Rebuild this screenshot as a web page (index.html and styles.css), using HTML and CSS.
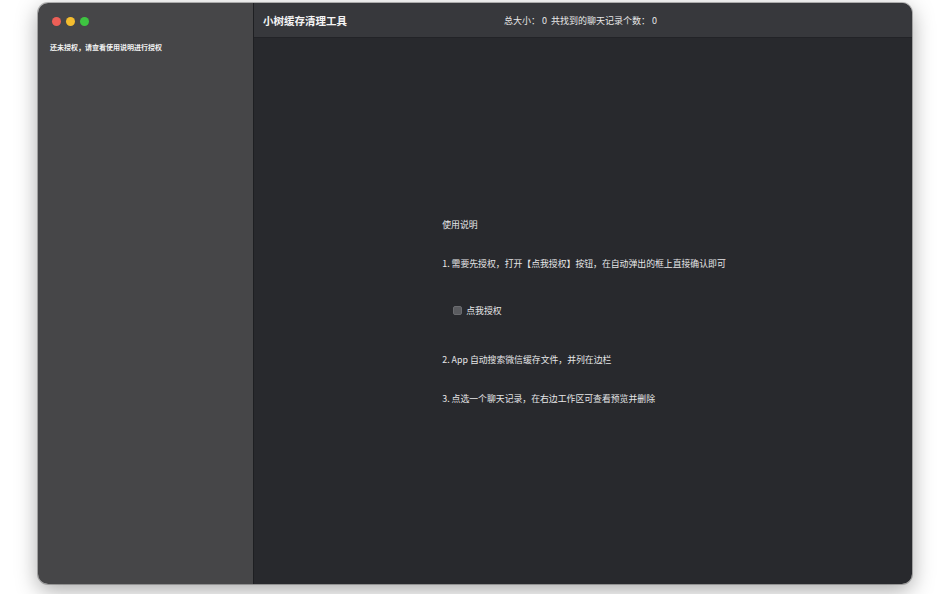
FILE: index.html
```html
<html><head>
<meta charset="UTF-8">
<meta name="viewport" content="width=device-width, initial-scale=1.0">
<title>小树缓存清理工具</title>
<link rel="stylesheet" href="styles.css">
</head>
<body>
  <div class="window">
    <aside class="sidebar">
      <div class="lights">
        <span class="light red"></span>
        <span class="light yellow"></span>
        <span class="light green"></span>
      </div>
      <p class="auth-tip">还未授权，请查看使用说明进行授权</p>
    </aside>

    <main class="main">
      <header class="titlebar">
        <span class="app-title">小树缓存清理工具</span>
        <span class="stats">总大小： 0 &nbsp;共找到的聊天记录个数： 0</span>
      </header>

      <section class="content">
        <div class="guide">
          <p class="guide-title">使用说明</p>
          <p class="step">1. 需要先授权，打开【点我授权】按钮，在自动弹出的框上直接确认即可</p>
          <label class="auth-check"><span class="box"></span>点我授权</label>
          <p class="step">2. App 自动搜索微信缓存文件，并列在边栏</p>
          <p class="step">3. 点选一个聊天记录，在右边工作区可查看预览并删除</p>
        </div>
      </section>
    </main>
  </div>
</body></html>
```

FILE: styles.css
```css
body {
  margin: 0;
  background-color: #fff;
  font-family: "Noto Sans CJK SC", "Noto Sans", sans-serif;
  color: #e6e6e8;
}
.window {
  display: flex;
  width: 874px;
  height: 581px;
  margin: 3px 0 0 38px;
  border-radius: 10px;
  overflow: hidden;
  box-shadow: 0 6px 22px rgba(0,0,0,0.35), 0 0 0 1px rgba(0,0,0,0.25);
}
.sidebar {
  width: 216px;
  background-color: #464648;
  border-right: 1px solid #1e1f22;
  box-sizing: border-box;
}
.lights {
  display: flex;
  gap: 5px;
  padding: 14px 0 0 14px;
}
.light {
  width: 9px;
  height: 9px;
  border-radius: 50%;
}
.red { background-color: #ed5f57; }
.yellow { background-color: #f4bd2f; }
.green { background-color: #3ec441; }
.auth-tip {
  margin: 16px 0 0 12px;
  font-size: 7px;
  font-weight: bold;
  color: #f2f2f2;
}
.main {
  flex: 1;
  display: flex;
  flex-direction: column;
  background-color: #28292d;
}
.titlebar {
  height: 35px;
  display: flex;
  align-items: center;
  background-color: #37383c;
  border-bottom: 1px solid #222327;
  box-sizing: border-box;
  padding-left: 9px;
}
.app-title {
  font-size: 10.5px;
  font-weight: bold;
  color: #f4f4f4;
  width: 241px;
}
.stats {
  font-size: 9px;
  color: #e8e8e8;
}
.content {
  flex: 1;
  display: flex;
  align-items: center;
  justify-content: center;
}
.guide {
  font-size: 8.85px;
  margin-left: 2px;
}
.guide p {
  margin: 0;
}
.guide-title {
  margin-bottom: 26px !important;
}
.step {
  margin-bottom: 26px !important;
}
.guide .step:last-child {
  margin-bottom: 0 !important;
}
.auth-check {
  display: flex;
  align-items: center;
  gap: 4px;
  margin: 34px 0 36px 11px;
}
.box {
  width: 9px;
  height: 9px;
  border-radius: 2px;
  background-color: #5a5b5f;
  border: 1px solid #6a6b6f;
  box-sizing: border-box;
}
```
